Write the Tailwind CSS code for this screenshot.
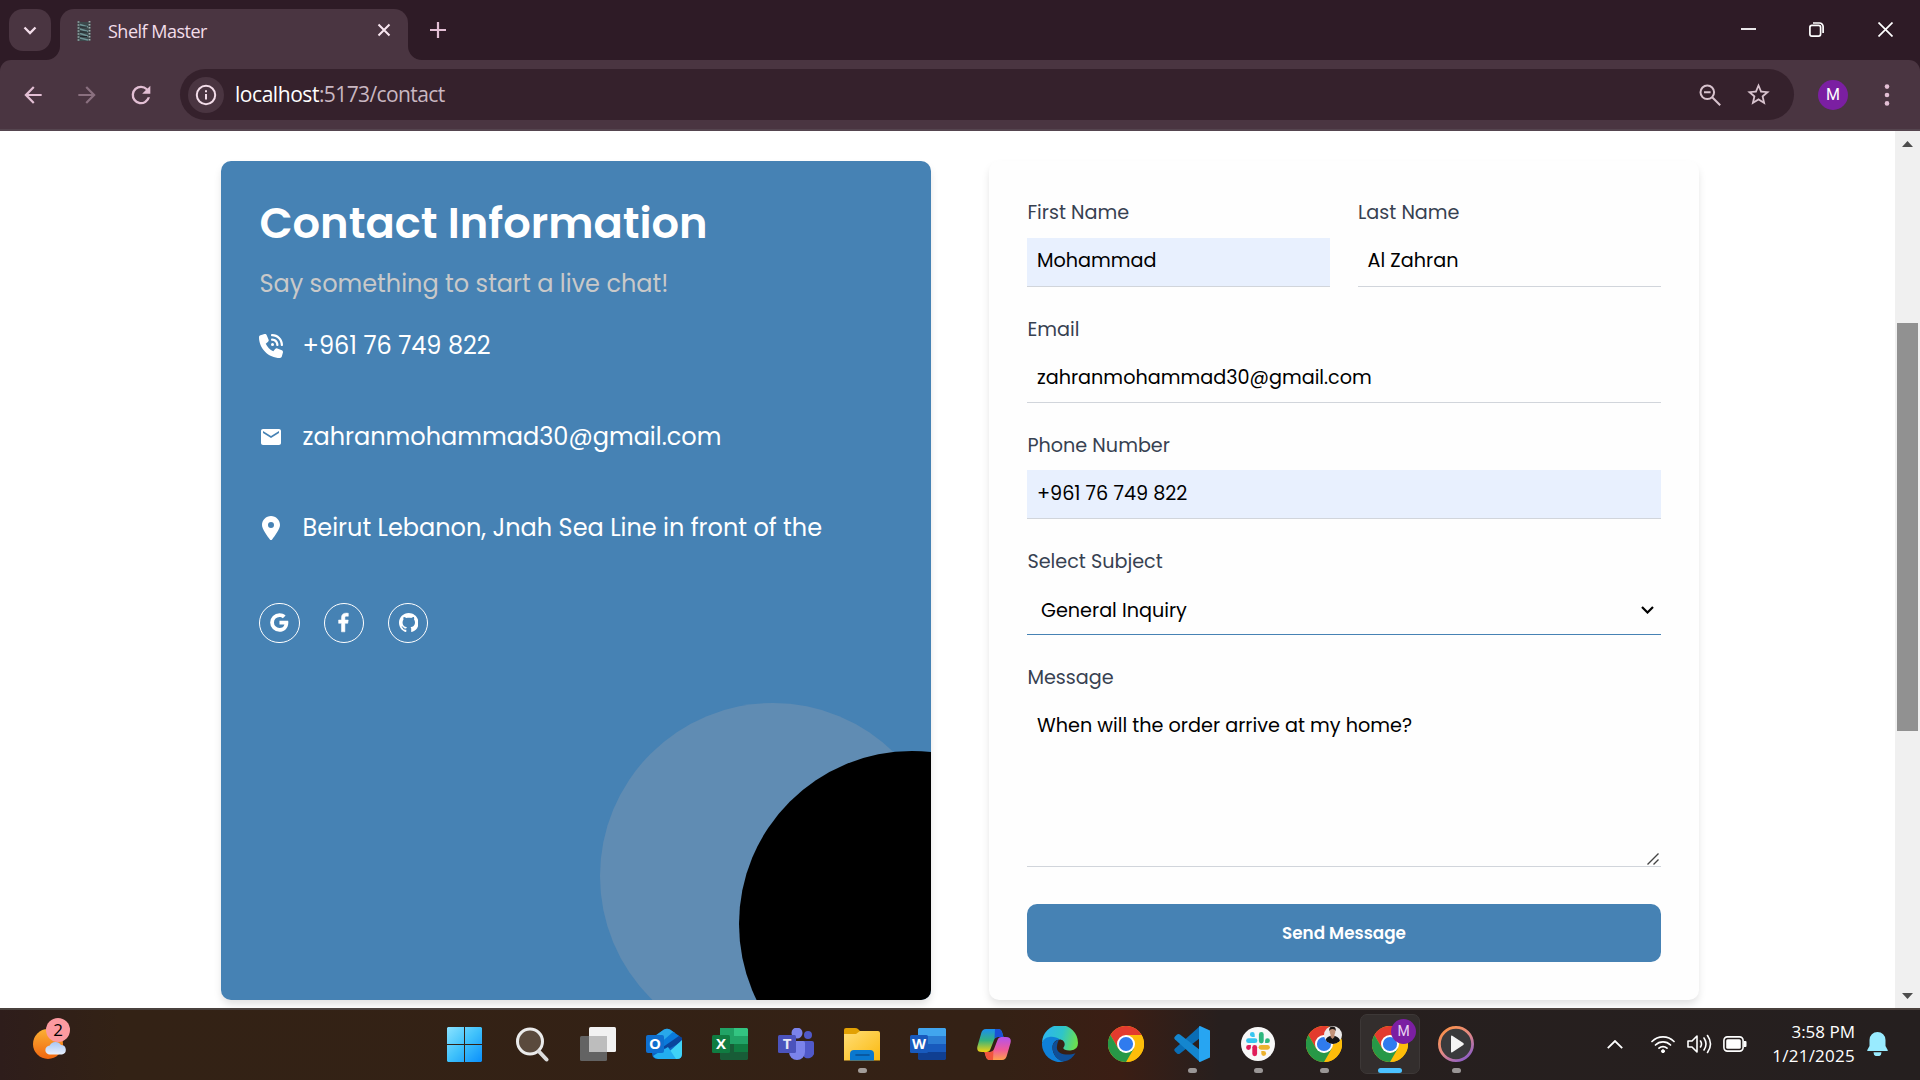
<!DOCTYPE html>
<html lang="en">
<head>
<meta charset="utf-8">
<title>Shelf Master</title>
<script src="https://cdn.jsdelivr.net/npm/@tailwindcss/browser@4"></script>
</head>
<body class="bg-white">
<div class="flex h-[1080px] w-[1920px] flex-col overflow-hidden">

  <!-- Shared symbols -->
  <svg class="absolute size-0" aria-hidden="true">
    <symbol id="chrome" viewBox="0 0 36 36">
      <circle cx="18" cy="18" r="18" fill="#fbbc05"/>
      <path d="M18 9h15.600A18 18 0 0 1 18 36l7.800-13.500z" fill="#fdbd0a"/>
      <path d="M2.400 9A18 18 0 0 1 33.600 9H18l-7.800 13.500z" fill="#e33b2e"/>
      <path d="M2.400 9 10.200 22.500 18 27l7.800-4.500L18 36A18 18 0 0 1 2.400 9z" fill="#279847"/>
      <circle cx="18" cy="18" r="9" fill="#fff"/>
      <circle cx="18" cy="18" r="7.100" fill="#2f7bee"/>
    </symbol>
  </svg>

  <!-- Tab strip -->
  <div class="flex h-[60px] shrink-0 items-end bg-[#2e1b26]">
    <div class="mb-[9px] ml-[9px] flex size-[42px] items-center justify-center rounded-[14px] bg-[#4a3541]">
      <svg class="size-[14px]" viewBox="0 0 14 14" fill="none" stroke="#f3dde9" stroke-width="2.300"><path d="M1.500 4.500 7 10l5.500-5.500"/></svg>
    </div>
    <svg class="-ml-[5px] size-[14px]" viewBox="0 0 14 14"><path d="M14 0v14H0A14 14 0 0 0 14 0z" fill="#4a3541"/></svg>
    <div class="flex h-[51px] w-[348px] items-center rounded-t-[14px] bg-[#4a3541] pb-[9px]">
      <svg class="ml-[16px] mt-[3px] h-[21px] w-[16px]" viewBox="0 0 16 21">
        <rect x="1.500" y="1" width="13" height="19" fill="#3c484b"/>
        <path d="M4 3.500l8 2.500M4 8l8 2.500M4 12.500l8 2.500M4 17l8 2" stroke="#6f9496" stroke-width="1.400"/>
        <path d="M4 6h7M4 11h7M4 15.500h7" stroke="#20282c" stroke-width="1.200"/>
        <path d="M2.500 0v21" stroke="#7f8f90" stroke-width="1.800" stroke-dasharray="2 1"/>
        <path d="M13.500 0v21" stroke="#a3b0b0" stroke-width="1.800" stroke-dasharray="1.500 1.500"/>
      </svg>
      <span class="ml-[16px] mt-[3px] flex-1 whitespace-nowrap font-['Open_Sans',sans-serif] text-[18px] tracking-[-0.5px] text-[#f3dde9]">Shelf Master</span>
      <svg class="mr-[17px] size-[14px]" viewBox="0 0 14 14" fill="none" stroke="#f8e6f0" stroke-width="2"><path d="M1.500 1.500l11 11M12.500 1.500l-11 11"/></svg>
    </div>
    <svg class="size-[14px]" viewBox="0 0 14 14"><path d="M0 0v14h14A14 14 0 0 1 0 0z" fill="#4a3541"/></svg>
    <svg class="mb-[22px] ml-[8px] size-[16px]" viewBox="0 0 16 16" stroke="#e3bfd4" stroke-width="2.200"><path d="M8 0v16M0 8h16"/></svg>
    <div class="mb-[23px] ml-auto mr-[27px] flex items-center">
      <svg class="mr-[53px] size-[15px]" viewBox="0 0 15 15" stroke="#fff" stroke-width="1.800"><path d="M0 7h15"/></svg>
      <svg class="mr-[54px] size-[15px]" viewBox="0 0 15 15" fill="none" stroke="#fff" stroke-width="1.700"><rect x=".9" y="3.400" width="10.700" height="10.700" rx="2"/><path d="M4 1h6.500a3.600 3.600 0 0 1 3.600 3.600V11"/></svg>
      <svg class="size-[15px]" viewBox="0 0 15 15" stroke="#fff" stroke-width="1.700"><path d="M.5.5l14 14M14.500.5l-14 14"/></svg>
    </div>
  </div>

  <!-- Toolbar -->
  <div class="h-[71px] shrink-0 bg-[#2e1b26]">
    <div class="flex h-[71px] items-center rounded-t-[11px] border-b-2 border-[#55454f] bg-[#4a3541]">
      <svg class="ml-[20px] size-[26px]" viewBox="0 0 24 24" fill="#e3bfd4"><path d="M20 11H7.830l5.590-5.590L12 4l-8 8 8 8 1.410-1.410L7.830 13H20v-2z"/></svg>
      <svg class="ml-[28px] size-[26px]" viewBox="0 0 24 24" fill="#8a707f"><path d="M4 13h12.170l-5.590 5.590L12 20l8-8-8-8-1.410 1.410L16.170 11H4v2z"/></svg>
      <svg class="ml-[27px] size-[28px]" viewBox="0 0 24 24" fill="#e3bfd4"><path d="M17.650 6.350A7.960 7.960 0 0 0 12 4a8 8 0 1 0 7.730 10h-2.080A6 6 0 1 1 12 6c1.660 0 3.140.69 4.220 1.780L13 11h7V4l-2.350 2.350z"/></svg>
      <div class="ml-[25px] flex h-[51px] w-[1614px] items-center rounded-full bg-[#35212c] pl-[8px] pr-[22px]">
        <div class="flex size-[36px] items-center justify-center rounded-full bg-[#4a3541]">
          <svg class="size-[22px]" viewBox="0 0 22 22" fill="none" stroke="#f3dde9" stroke-width="2"><circle cx="11" cy="11" r="9.200"/><path d="M11 10v5.500M11 6.300v2"/></svg>
        </div>
        <div class="ml-[11px] flex-1 whitespace-nowrap font-['Open_Sans',sans-serif] text-[21px] tracking-[-0.6px] text-[#c9b7c1]"><span class="tracking-[-0.45px] text-white">localhost</span>:5173/contact</div>
        <svg class="size-[22px]" viewBox="0 0 22 22" fill="none" stroke="#d8c3ce" stroke-width="2"><circle cx="8.300" cy="8.300" r="6.800"/><path d="M5 8.300h6.600M13.200 13.200l8 8"/></svg>
        <svg class="ml-[24px] size-[27px]" viewBox="0 0 24 24" fill="#d8c3ce"><path d="M22 9.240l-7.190-.62L12 2 9.190 8.630 2 9.240l5.460 4.730L5.820 21 12 17.270 18.180 21l-1.630-7.030L22 9.240zM12 15.400l-3.760 2.270 1-4.280-3.320-2.880 4.380-.38L12 6.100l1.710 4.040 4.380.38-3.320 2.880 1 4.280L12 15.400z"/></svg>
      </div>
      <div class="ml-[24px] flex size-[30px] items-center justify-center rounded-full bg-[#7b1fa2] font-['Roboto',sans-serif] text-[16px] text-white">M</div>
      <svg class="ml-[36px] h-[22px] w-[6px]" viewBox="0 0 6 22" fill="#e3bfd4"><circle cx="3" cy="2.600" r="2.300"/><circle cx="3" cy="11" r="2.300"/><circle cx="3" cy="19.400" r="2.300"/></svg>
    </div>
  </div>

  <!-- Page -->
  <div class="flex h-[877px] shrink-0 overflow-hidden bg-white font-['Poppins','Inter',sans-serif]">
    <main class="flex flex-1 gap-[58px] pl-[221px] pt-[30px]">
      <section class="relative h-[839px] w-[710px] overflow-hidden rounded-[10px] bg-[#4682b4] p-[38.4px] text-white shadow-[0_5px_8px_-1px_rgba(0,0,0,0.13)]">
        <div class="absolute left-[379px] top-[542px] size-[345.6px] rounded-full bg-[#608cb3]"></div>
        <div class="absolute left-[518px] top-[590px] size-[345.6px] rounded-full bg-black"></div>
        <h1 class="whitespace-nowrap text-[43.2px] font-semibold leading-[48px]">Contact Information</h1>
        <p class="mt-[19.200px] whitespace-nowrap text-[24px] leading-[33.600px] text-[#c9c9c9]">Say something to start a live chat!</p>
        <div class="mt-[28.800px] flex flex-col gap-[57.600px] text-[24px] leading-[33.600px]">
          <div class="flex items-center gap-[19.200px]">
            <svg class="size-[24px]" viewBox="0 0 512 512" fill="#fff"><path d="M280 0C408.100 0 512 103.900 512 232c0 13.300-10.700 24-24 24s-24-10.700-24-24c0-101.600-82.400-184-184-184c-13.300 0-24-10.700-24-24s10.700-24 24-24zm8 192a32 32 0 1 1 0 64 32 32 0 1 1 0-64zm-32-72c0-13.300 10.700-24 24-24c75.100 0 136 60.900 136 136c0 13.300-10.700 24-24 24s-24-10.700-24-24c0-48.600-39.400-88-88-88c-13.300 0-24-10.700-24-24zM117.500 1.400c19.400-5.300 39.700 4.600 47.400 23.200l40 96c6.800 16.300 2.100 35.200-11.600 46.300L144 207.300c33.300 70.400 90.300 127.400 160.700 160.700L345 318.700c11.200-13.700 30-18.400 46.300-11.600l96 40c18.600 7.700 28.500 28 23.200 47.400l-24 88C481.800 499.900 466 512 448 512C200.600 512 0 311.400 0 64C0 46 12.100 30.200 29.500 25.400l88-24z"/></svg>
            <span class="whitespace-nowrap">+961 76 749 822</span>
          </div>
          <div class="flex items-center gap-[19.200px]">
            <svg class="size-[24px]" viewBox="0 0 24 24" fill="#fff"><path d="M20 4H4c-1.100 0-1.990.9-1.990 2L2 18c0 1.100.9 2 2 2h16c1.100 0 2-.9 2-2V6c0-1.100-.9-2-2-2zm0 4l-8 5-8-5V6l8 5 8-5v2z"/></svg>
            <span class="whitespace-nowrap">zahranmohammad30@gmail.com</span>
          </div>
          <div class="flex items-center gap-[19.200px]">
            <svg class="size-[24px]" viewBox="-64 0 512 512" fill="#fff"><path d="M215.700 499.200C267 435 384 279.400 384 192C384 86 298 0 192 0S0 86 0 192c0 87.400 117 243 168.300 307.200c12.300 15.300 35.100 15.300 47.400 0zM192 128a64 64 0 1 1 0 128 64 64 0 1 1 0-128z"/></svg>
            <span class="whitespace-nowrap">Beirut Lebanon, Jnah Sea Line in front of the</span>
          </div>
        </div>
        <div class="mt-[57.600px] flex gap-[24px]">
          <div class="flex size-[40.500px] items-center justify-center rounded-full border border-white"><svg class="size-[25px]" viewBox="0 0 24 24" fill="#fff"><path d="M20.283 10.356h-8.327v3.451h4.792c-.446 2.193-2.313 3.453-4.792 3.453a5.270 5.270 0 0 1-5.279-5.280 5.270 5.270 0 0 1 5.279-5.279c1.259 0 2.397.447 3.290 1.178l2.600-2.599c-1.584-1.381-3.615-2.233-5.890-2.233a8.908 8.908 0 0 0-8.934 8.934 8.907 8.907 0 0 0 8.934 8.934c4.467 0 8.529-3.249 8.529-8.934 0-.528-.081-1.097-.202-1.625z"/></svg></div>
          <div class="flex size-[40.500px] items-center justify-center rounded-full border border-white"><svg class="size-[25px]" viewBox="1 0 24 24" fill="#fff" stroke="#fff" stroke-width=".5"><path d="M13.397 20.997v-8.196h2.765l.411-3.209h-3.176V7.548c0-.926.258-1.560 1.587-1.560h1.684V3.127A22.336 22.336 0 0 0 14.201 3c-2.444 0-4.122 1.492-4.122 4.231v2.355H7.332v3.209h2.753v8.202h3.312z"/></svg></div>
          <div class="flex size-[40px] items-center justify-center rounded-full border border-white"><svg class="size-[19.5px]" viewBox="0 0 16 16" fill="#fff"><path d="M8 0C3.580 0 0 3.580 0 8c0 3.540 2.290 6.530 5.470 7.590.4.070.55-.17.55-.38 0-.19-.01-.82-.01-1.490-2.010.37-2.530-.49-2.690-.94-.09-.23-.48-.94-.82-1.130-.28-.15-.68-.52-.01-.53.63-.01 1.080.58 1.230.82.72 1.210 1.870.87 2.330.66.070-.52.28-.87.51-1.070-1.780-.2-3.640-.89-3.640-3.950 0-.87.31-1.590.82-2.150-.08-.2-.36-1.020.08-2.120 0 0 .67-.21 2.200.82.64-.18 1.320-.27 2-.27s1.360.09 2 .27c1.530-1.040 2.200-.82 2.200-.82.44 1.100.16 1.920.08 2.120.51.56.82 1.270.82 2.150 0 3.070-1.870 3.750-3.650 3.950.29.25.54.73.54 1.480 0 1.070-.01 1.930-.01 2.200 0 .21.15.46.55.38A8.010 8.010 0 0 0 16 8c0-4.420-3.580-8-8-8z"/></svg></div>
        </div>
      </section>

      <section class="flex h-[839px] w-[710px] flex-col rounded-[10px] bg-[#fefefe] px-[38.400px] pt-[38.400px] text-[19.200px] leading-[28.800px] text-black shadow-[0_5px_8px_-1px_rgba(0,0,0,0.13)]">
        <div class="flex gap-[28px]">
          <div class="flex-1">
            <div class="text-[#374151]">First Name</div>
            <div class="mt-[9.600px] h-[49px] border-b border-[#d1d5db] bg-[#e8f0fe] px-[9.600px] pt-[9.300px]">Mohammad</div>
          </div>
          <div class="flex-1">
            <div class="text-[#374151]">Last Name</div>
            <div class="mt-[9.600px] h-[49px] border-b border-[#d1d5db] px-[9.600px] pt-[9.300px]">Al Zahran</div>
          </div>
        </div>
        <div class="mt-[29.100px] text-[#374151]">Email</div>
        <div class="mt-[9.600px] h-[49px] border-b border-[#d1d5db] px-[9.600px] pt-[9.600px]">zahranmohammad30@gmail.com</div>
        <div class="mt-[28.800px] text-[#374151]">Phone Number</div>
        <div class="mt-[9.600px] h-[49px] border-b border-[#d1d5db] bg-[#e8f0fe] px-[9.600px] pt-[9.600px]">+961 76 749 822</div>
        <div class="mt-[28.800px] text-[#374151]">Select Subject</div>
        <div class="mt-[9.600px] flex h-[48.400px] items-center border-b border-[#4682b4] pl-[13.600px] pr-[7px]">
          <span class="flex-1 pt-[1.400px]">General Inquiry</span>
          <svg class="h-[8px] w-[13px]" viewBox="0 0 13 8" fill="none" stroke="#000" stroke-width="2.200"><path d="M1 1l5.500 5.500L12 1"/></svg>
        </div>
        <div class="mt-[29.400px] text-[#374151]">Message</div>
        <div class="mt-[9.600px] flex h-[164.500px] items-end justify-between border-b border-[#d1d5db] pl-[9.600px] pr-[2px] pb-px">
          <span class="self-start pt-[9.600px]">When will the order arrive at my home?</span>
          <svg class="size-[12px]" viewBox="0 0 12 12" stroke="#444" stroke-width="1.400"><path d="M.5 11.500l11-11M6.500 11.500l5-5"/></svg>
        </div>
        <div class="mt-[37px] flex h-[58px] items-center justify-center rounded-[10px] bg-[#4682b4] text-[16.800px] font-semibold text-white">Send Message</div>
      </section>
    </main>
    <div class="flex w-[25px] flex-col items-center bg-[#f0f0f0] pb-[9px] pt-[10px]">
      <svg class="h-[6px] w-[11px]" viewBox="0 0 11 6" fill="#4d4d4d"><path d="M5.500 0 11 6H0z"/></svg>
      <div class="mt-[176px] h-[408px] w-[21px] bg-[#919191]"></div>
      <svg class="mt-auto h-[6px] w-[11px]" viewBox="0 0 11 6" fill="#4d4d4d"><path d="M0 0h11L5.500 6z"/></svg>
    </div>
  </div>

  <!-- Taskbar -->
  <div class="flex h-[72px] shrink-0 items-stretch border-t-2 border-[#4a413d] bg-[linear-gradient(90deg,#2e1d1b_0px,#332215_120px,#342115_1000px,#3b1e14_1120px,#271f1e_1220px,#251f1f_1920px)]">
    <div class="relative w-[433px]">
      <svg class="absolute left-[33px] top-[16px] h-[36px] w-[40px]" viewBox="0 0 40 36">
        <defs><linearGradient id="sun" x1="0" y1="0" x2="0" y2="1"><stop offset="0" stop-color="#fbb034"/><stop offset="1" stop-color="#f0660f"/></linearGradient><linearGradient id="cloud" x1="0" y1="0" x2="0" y2="1"><stop offset="0" stop-color="#a9c7f5"/><stop offset="1" stop-color="#e8f0fd"/></linearGradient></defs>
        <circle cx="15" cy="18" r="15" fill="url(#sun)"/>
        <path d="M17 28.500a4.500 4.500 0 0 1-.3-9A6.500 6.500 0 0 1 28 19a4.800 4.800 0 0 1 1 9.500z" fill="url(#cloud)"/>
      </svg>
      <div class="absolute left-[46px] top-[8px] flex size-[24px] items-center justify-center rounded-full bg-[#fc9aa0] font-['Open_Sans',sans-serif] text-[17px] text-black">2</div>
    </div>

    <!-- Start -->
    <div class="flex w-[63px] justify-center pt-[17px]">
      <svg class="size-[35px]" viewBox="0 0 35 35"><defs><linearGradient id="win" x1="0" y1="0" x2="1" y2="1"><stop offset="0" stop-color="#8be3ff"/><stop offset=".5" stop-color="#3fc1fb"/><stop offset="1" stop-color="#0a8ffb"/></linearGradient></defs><path d="M1 0h16v17H0V1zM18 0h16l1 1v16H18zM0 18h17v17H1l-1-1zM18 18h17v16l-1 1H18z" fill="url(#win)"/></svg>
    </div>
    <!-- Search -->
    <div class="ml-[3px] flex w-[66px] justify-center pt-[17px]">
      <svg class="h-[35px] w-[34px]" viewBox="0 0 34 35"><circle cx="15" cy="14.500" r="12.500" fill="#5a4a3d" stroke="#ebebeb" stroke-width="3"/><path d="M24 24.500l7.500 8" stroke="#dcdcdc" stroke-width="4" stroke-linecap="round"/></svg>
    </div>
    <!-- Task view -->
    <div class="flex w-[66px] justify-center pt-[17px]">
      <svg class="h-[35px] w-[36px]" viewBox="0 0 36 35"><rect x="0" y="9" width="27" height="25" rx="1.500" fill="#636363"/><rect x="9" y="0" width="27" height="25" rx="1.500" fill="#f2f2f2"/><path d="M9 9h18v16H10.500A1.500 1.500 0 0 1 9 23.500z" fill="#bdbdbd"/></svg>
    </div>
    <!-- Outlook -->
    <div class="flex w-[66px] justify-center pt-[18px]">
      <svg class="h-[32px] w-[36px]" viewBox="0 0 36 32"><path d="M6 10 18 1.500Q21 0 24 1.500L36 10v16q0 5-5 5H12q-6 0-6-6z" fill="#0c63c4"/><path d="M6 10 18 1.500Q21 0 24 1.500L29 5 12 17 6 14z" fill="#28a8ea"/><path d="M27 4l6 4-15 11-6-2z" fill="#0a7adb"/><path d="M33 8l3 2v4L20 22l-3-3z" fill="#0a459c"/><path d="M36 12v14q0 5-5 5H15z" fill="#3fd3f7"/><path d="M10 26l12-7 8 12H12q-3 0-5-3z" fill="#22aef0"/><rect y="7" width="18" height="18" rx="2" fill="#0f6fcf"/><text x="9" y="21.300" text-anchor="middle" font-family="Open Sans" font-weight="700" font-size="15" fill="#fff">O</text></svg>
    </div>
    <!-- Excel -->
    <div class="flex w-[66px] justify-center pt-[18px]">
      <svg class="h-[32px] w-[36px]" viewBox="0 0 36 32"><path d="M8 0h14v8H8z" fill="#21a366"/><path d="M22 0h13l1 1v7H22z" fill="#33c481"/><path d="M8 8h14v8H8z" fill="#21a366"/><path d="M22 8h14v8H22z" fill="#21a366"/><path d="M8 16h14v8H8z" fill="#185c37"/><path d="M22 16h14v8H22z" fill="#107c41"/><path d="M8 24h28v7l-1 1H9l-1-1z" fill="#185c37"/><rect y="7" width="18" height="18" rx="1.500" fill="#107c41"/><text x="9" y="21.300" text-anchor="middle" font-family="Open Sans" font-weight="700" font-size="15" fill="#fff">X</text></svg>
    </div>
    <!-- Teams -->
    <div class="flex w-[66px] justify-center pt-[18px]">
      <svg class="h-[32px] w-[36px]" viewBox="0 0 36 32"><circle cx="19" cy="5" r="5.500" fill="#7b83eb"/><circle cx="30" cy="7" r="4" fill="#5059c9"/><path d="M24 13h10q2 0 2 2v7a6 6 0 0 1-12 4z" fill="#5059c9"/><path d="M11 13h14q2 0 2 2v9a8 8 0 0 1-16 0z" fill="#7b83eb"/><rect y="7" width="18" height="18" rx="1.500" fill="#4b53bc"/><text x="9" y="21.300" text-anchor="middle" font-family="Open Sans" font-weight="700" font-size="15" fill="#e6e6f5">T</text></svg>
    </div>
    <!-- File explorer -->
    <div class="flex w-[66px] flex-col items-center pt-[18px]">
      <svg class="h-[33px] w-[36px]" viewBox="0 0 36 33"><defs><linearGradient id="fold" x1="0" y1="0" x2="1" y2="1"><stop offset="0" stop-color="#ffde76"/><stop offset="1" stop-color="#fbb90f"/></linearGradient></defs><path d="M0 2q0-2 2-2h9q2 0 3 1l2 2v6H0z" fill="#e2a103"/><path d="M0 6h12l4-3h18q2 0 2 2v27.500H0z" fill="url(#fold)"/><path d="M6 32.500V26q0-4 4-4h16q4 0 4 4v6.500z" fill="#0a78cf"/><path d="M12 27h13" stroke="#084f94" stroke-width="1.600" stroke-linecap="round"/></svg>
      <div class="mt-[7px] h-[5px] w-[9px] rounded-full bg-[#a39d99]"></div>
    </div>
    <!-- Word -->
    <div class="flex w-[66px] justify-center pt-[18px]">
      <svg class="h-[32px] w-[36px]" viewBox="0 0 36 32"><path d="M8 1l1-1h26l1 1v7H8z" fill="#41a5ee"/><path d="M8 8h28v8H8z" fill="#2b7cd3"/><path d="M8 16h28v8H8z" fill="#185abd"/><path d="M8 24h28v7l-1 1H9l-1-1z" fill="#103f91"/><rect y="7" width="18" height="18" rx="1.500" fill="#185abd"/><text x="9" y="21.300" text-anchor="middle" font-family="Open Sans" font-weight="700" font-size="14.500" fill="#fff">W</text></svg>
    </div>
    <!-- Copilot -->
    <div class="flex w-[66px] justify-center pt-[19px]">
      <svg class="h-[31px] w-[34px]" viewBox="0 0 34 31"><defs><linearGradient id="cpa" x1="0" y1="0" x2="0" y2="1"><stop offset="0" stop-color="#1b8ff0"/><stop offset=".5" stop-color="#35b37e"/><stop offset="1" stop-color="#f2d10f"/></linearGradient><linearGradient id="cpb" x1="0" y1="0" x2="0" y2="1"><stop offset="0" stop-color="#b252ee"/><stop offset=".55" stop-color="#ef5a9a"/><stop offset="1" stop-color="#ffa04c"/></linearGradient></defs><path d="M9 0h12q3 0 4 3l1.500 5H21q-3 0-4 3l-3.500 9q-1 3-4 3H5q-6 0-4.500-6L4 5q1-5 5-5z" fill="url(#cpa)"/><path d="M18 0h3q3 0 4 3l1.500 5H21q-2.500 0-3.500 2z" fill="#1a50d6"/><path d="M25 31H13q-3 0-4-3l-1.500-5H13q3 0 4-3l3.500-9q1-3 4-3H29q6 0 4.500 6L30 26q-1 5-5 5z" fill="url(#cpb)"/><path d="M16 31h-3q-3 0-4-3l-1.500-5H13q2.500 0 3.500-2z" fill="#f0543c"/></svg>
    </div>
    <!-- Edge -->
    <div class="flex w-[66px] justify-center pt-[16px]">
      <svg class="size-[36px]" viewBox="0 0 36 36"><defs><linearGradient id="ed" x1="0" y1=".3" x2="1" y2=".5"><stop offset="0" stop-color="#2db4f2"/><stop offset=".55" stop-color="#2fc5c8"/><stop offset="1" stop-color="#6be04f"/></linearGradient></defs><path d="M0 17A18 18 0 0 1 36 17q0 7-7.500 7.500c-5 .3-8-1.500-7-3 2.500-3 1-8-4-8C9 13.500 3 12 0 17z" fill="url(#ed)"/><path d="M0 17C2 10 12 9 18 13.500c-5 0-7.500 4-7.500 8C10.500 28 15 34 22 35.500A18 18 0 0 1 0 17z" fill="#0f80d8"/><path d="M17 13.500c-4 1.500-6.500 4-6.500 8C10.500 29 17 36.500 23 35.300c4.500-1 8-4 10.500-8-8 3-20 1-18.500-7 .2-2.500 1-5 2-6.800z" fill="#0f4f98"/></svg>
    </div>
    <!-- Chrome -->
    <div class="flex w-[66px] justify-center pt-[16px]"><svg class="size-[36px]"><use href="#chrome"/></svg></div>
    <!-- VS Code -->
    <div class="flex w-[66px] flex-col items-center pt-[16px]">
      <svg class="size-[36px]" viewBox="0 0 36 36"><path d="M26 0 1 22.500q-1.500 1.500 0 3l2 2q1.500 1 3 0L26 12z" fill="#0a6db5"/><path d="M26 36 1 13.500q-1.500-1.500 0-3l2-2q1.500-1 3 0L26 24z" fill="#1486cf"/><path d="M26 0 36 4.500v27L26 36l-1-.5V.5z" fill="#27a5f2"/></svg>
      <div class="mt-[6px] h-[5px] w-[9px] rounded-full bg-[#9a9696]"></div>
    </div>
    <!-- Slack -->
    <div class="flex w-[66px] flex-col items-center pt-[17px]">
      <svg class="size-[34px]" viewBox="0 0 34 34"><circle cx="17" cy="17" r="17" fill="#f8f8f8"/><g stroke-width="4.800" stroke-linecap="round"><path d="M7.500 13.700h6.500" stroke="#36c5f0"/><path d="M20.300 7.500v6.500" stroke="#2eb67d"/><path d="M20 20.300h6.500" stroke="#ecb22e"/><path d="M13.700 20.300v6.500" stroke="#e01e5a"/></g><path d="M13.700 9.900h-2.400a2.400 2.400 0 1 1 2.400-2.400z" fill="#36c5f0"/><path d="M24.100 13.700a2.400 2.400 0 1 1 2.400 2.400h-2.400z" fill="#2eb67d"/><path d="M20.300 24.100h2.400a2.400 2.400 0 1 1-2.400 2.400z" fill="#ecb22e"/><path d="M9.900 18.100v2.400a2.400 2.400 0 1 1-2.400-2.400z" fill="#e01e5a"/></svg>
      <div class="mt-[7px] h-[5px] w-[9px] rounded-full bg-[#9a9696]"></div>
    </div>
    <!-- Chrome, personal profile -->
    <div class="flex w-[66px] flex-col items-center pt-[16px]">
      <div class="relative size-[36px]">
        <svg class="size-[36px]"><use href="#chrome"/></svg>
        <svg class="absolute left-[18px] top-0 size-[18px]" viewBox="0 0 18 18"><defs><clipPath id="av"><circle cx="9" cy="9" r="9"/></clipPath></defs><g clip-path="url(#av)"><path d="M0 0h18v18H0z" fill="#eceaea"/><path d="M1 18q0-7 5-8h5q5 1 6 8z" fill="#141416"/><path d="M6.500 7h4v4l-2 2-2-2z" fill="#b98a70"/><ellipse cx="8.500" cy="5" rx="2.900" ry="3.800" fill="#c2937a"/><path d="M5.300 5q-.6-4.500 3.200-4.500T11.700 5q-.8-2-3.200-2T5.300 5z" fill="#1d1614"/></g></svg>
      </div>
      <div class="mt-[6px] h-[5px] w-[9px] rounded-full bg-[#9a9696]"></div>
    </div>
    <!-- Chrome, active window -->
    <div class="flex w-[66px] justify-center pt-[4px]">
      <div class="flex h-[60px] w-[60px] flex-col items-center rounded-[7px] border border-[#3d3837] bg-[#332e2d] pt-[11px]">
        <div class="relative size-[36px]">
          <svg class="size-[36px]"><use href="#chrome"/></svg>
          <div class="absolute -top-[7px] left-[19px] flex size-[25px] items-center justify-center rounded-full bg-[#7b1fa2] font-['Roboto',sans-serif] text-[14px] text-[#ead5f2]">M</div>
        </div>
        <div class="mt-[6px] h-[5px] w-[24px] rounded-full bg-[#4cc2ff]"></div>
      </div>
    </div>
    <!-- Media player -->
    <div class="flex w-[66px] flex-col items-center pt-[16px]">
      <svg class="size-[36px]" viewBox="0 0 36 36"><defs><linearGradient id="mp" x1=".1" y1="0" x2=".8" y2="1"><stop offset="0" stop-color="#fb9143"/><stop offset=".5" stop-color="#e58a84"/><stop offset="1" stop-color="#8a5cc9"/></linearGradient></defs><circle cx="18" cy="18" r="16.600" fill="#3a3a3c" stroke="url(#mp)" stroke-width="2.800"/><path d="M13 10.500q0-1.500 1.300-.8l11 7.300q1.200 1 0 2l-11 7.300q-1.300.7-1.300-.8z" fill="#f4f4f4"/></svg>
      <div class="mt-[6px] h-[5px] w-[9px] rounded-full bg-[#9a9696]"></div>
    </div>

    <!-- System tray -->
    <div class="ml-auto mr-[32px] flex items-center pb-[2px] text-white">
      <svg class="h-[9px] w-[16px]" viewBox="0 0 16 9" fill="none" stroke="#fff" stroke-width="1.800"><path d="M.8 8.200 8 1l7.200 7.200"/></svg>
      <svg class="ml-[28px] h-[19px] w-[24px]" viewBox="0 0 24 19" fill="none" stroke="#fff" stroke-width="1.700" stroke-linecap="round"><path d="M1 6.500a15.500 15.500 0 0 1 22 0M4.500 10a10.500 10.500 0 0 1 15 0M8 13.200a5.800 5.800 0 0 1 8 0"/><circle cx="12" cy="16.200" r="1.500" fill="#fff" stroke-width="1"/></svg>
      <svg class="ml-[12px] h-[20px] w-[25px]" viewBox="0 0 25 20" fill="none" stroke="#fff" stroke-width="1.600" stroke-linecap="round" stroke-linejoin="round"><path d="M1 7h4l5-5v16l-5-5H1z"/><path d="M13.500 7q2 3 0 6M17 4q4 6 0 12M20.500 1.500q6 8.500 0 17"/></svg>
      <svg class="ml-[11px] h-[16px] w-[24px]" viewBox="0 0 24 16"><rect x=".9" y=".9" width="19.200" height="14.200" rx="3.500" fill="none" stroke="#fff" stroke-width="1.600"/><rect x="3.200" y="3.200" width="14.600" height="9.600" rx="1.500" fill="#fff"/><path d="M21 5h1.500q1 0 1 1v4q0 1-1 1H21z" fill="#fff"/></svg>
      <div class="ml-[25px] w-[83px] whitespace-nowrap text-right font-['Open_Sans',sans-serif] text-[17px] leading-[24px]">
        <div>3:58 PM</div>
        <div class="tracking-[0.25px]">1/21/2025</div>
      </div>
      <svg class="ml-[12px] h-[24px] w-[21px]" viewBox="0 0 21 24" fill="#99ebff"><path d="M10.500 0a8 8 0 0 1 8 8v6l2.200 4q.3 1-.7 1H1q-1 0-.7-1l2.200-4V8a8 8 0 0 1 8-8zM6.500 20.300h8a4 4 0 0 1-8 0z"/></svg>
    </div>
  </div>
</div>
</body>
</html>
